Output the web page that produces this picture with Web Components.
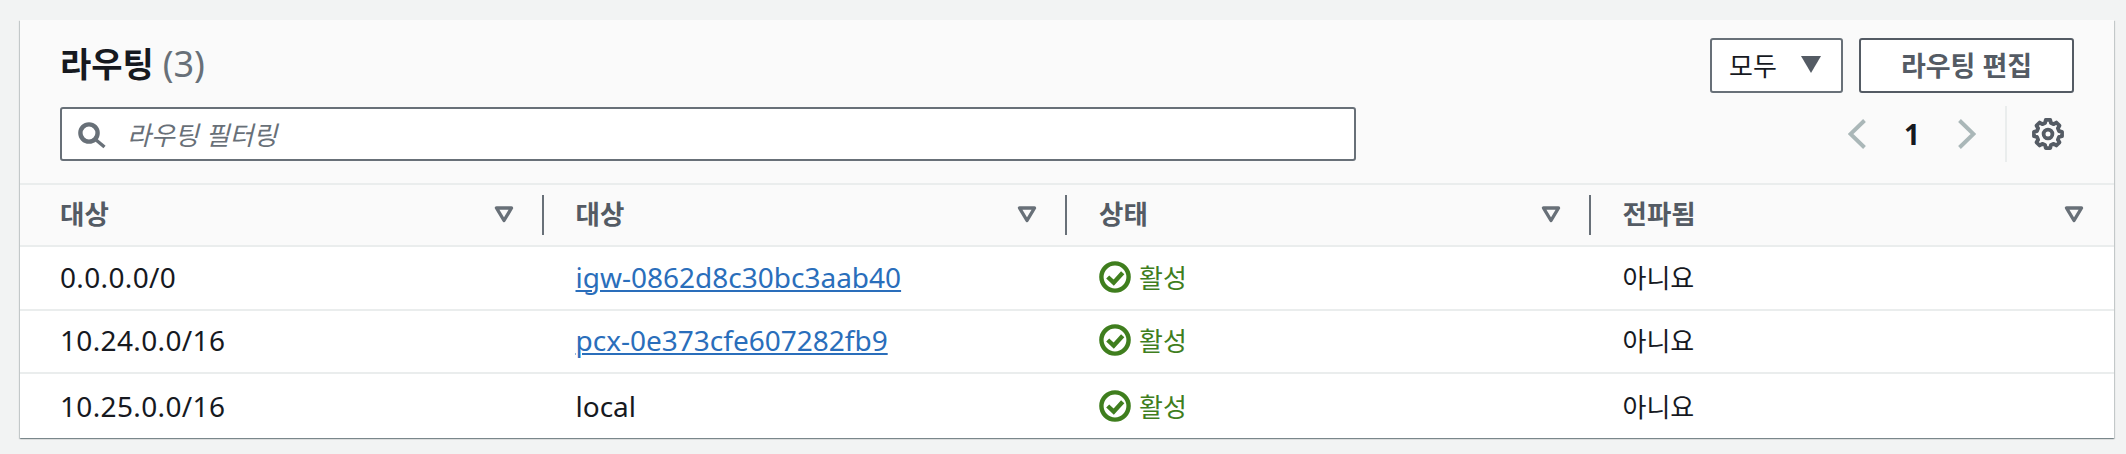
<!DOCTYPE html>
<html lang="ko">
<head>
<meta charset="utf-8">
<title>라우팅</title>
<style>
  html, body { margin: 0; height: 100%; }
  body {
    background: #f2f3f3;
    padding: 20px 12px 0 20px;
    box-sizing: border-box;
    overflow: hidden;
    font: 26px "Noto Sans", "Noto Sans CJK KR", sans-serif;
    color: #16191f;
  }
  a { color: #2a6ebb; text-decoration-thickness: 2px; text-underline-offset: 2px; }
</style>
</head>
<body>
<route-panel>
  <route-header slot="header" count="3"></route-header>
  <route-table>
    <route-row>
      <route-cell latin>0.0.0.0/0</route-cell>
      <route-cell latin><a href="#">igw-0862d8c30bc3aab40</a></route-cell>
      <route-cell><status-ok>활성</status-ok></route-cell>
      <route-cell>아니요</route-cell>
    </route-row>
    <route-row>
      <route-cell latin>10.24.0.0/16</route-cell>
      <route-cell latin><a href="#">pcx-0e373cfe607282fb9</a></route-cell>
      <route-cell><status-ok>활성</status-ok></route-cell>
      <route-cell>아니요</route-cell>
    </route-row>
    <route-row>
      <route-cell latin>10.25.0.0/16</route-cell>
      <route-cell latin>local</route-cell>
      <route-cell><status-ok>활성</status-ok></route-cell>
      <route-cell>아니요</route-cell>
    </route-row>
  </route-table>
</route-panel>

<script>
// outline of the settings gear, 8 teeth around the middle of a 32 box
function gearPath() {
  const pts = [];
  for (let i = 0; i < 8; i++) {
    const a = i * 45 - 90;
    [[-15, 11.4], [-9, 14.2], [9, 14.2], [15, 11.4]].forEach(([d, r]) => {
      const t = (a + d) * Math.PI / 180;
      pts.push((16 + r * Math.cos(t)).toFixed(2) + ' ' + (16 + r * Math.sin(t)).toFixed(2));
    });
  }
  return 'M' + pts.join('L') + 'Z';
}

class RoutePanel extends HTMLElement {
  connectedCallback() {
    this.attachShadow({ mode: 'open' });
    this.shadowRoot.innerHTML = `
      <style>
        :host {
          display: block;
          height: 418px;
          background: #fff;
          box-shadow: 0 1px 1px 0 rgba(0,28,36,.3), 1px 1px 1px 0 rgba(0,28,36,.15), -1px 1px 1px 0 rgba(0,28,36,.15);
        }
      </style>
      <slot name="header"></slot>
      <slot></slot>
    `;
  }
}

class RouteHeader extends HTMLElement {
  connectedCallback() {
    this.attachShadow({ mode: 'open' });
    this.shadowRoot.innerHTML = `
      <style>
        :host {
          display: flex;
          justify-content: space-between;
          padding: 18px 40px 21px;
          height: 124px;
          background: #fafafa;
          border-bottom: 2px solid #eaeded;
        }
        .left { display: flex; flex-direction: column; }
        h2 { margin: 0; padding-top: 2px; font-size: 34px; line-height: 48px; font-weight: 700; color: #16191f; }
        h2 span { font-size: 36px; font-weight: 400; color: #687078; }
        .filter {
          margin-top: 19px;
          width: 1296px;
          height: 54px;
          box-sizing: border-box;
          display: flex;
          align-items: center;
          gap: 18px;
          padding-left: 15px;
          background: #fff;
          border: 2px solid #687078;
          border-radius: 3px;
        }
        .filter span { font-style: italic; color: #687078; }
        .right { display: flex; flex-direction: column; align-items: flex-end; }
        .btns { display: flex; gap: 16px; height: 55px; }
        .btn {
          box-sizing: border-box;
          display: flex;
          align-items: center;
          padding-bottom: 2px;
          background: #fff;
          border-radius: 3px;
        }
        .mode { width: 133px; padding-left: 17px; gap: 24px; border: 2px solid #687078; color: #16191f; }
        .edit { width: 215px; justify-content: center; border: 2px solid #545b64; color: #545b64; font-weight: 700; font-size: 27px; }
        .pager { margin-top: 13px; height: 56px; display: flex; align-items: center; padding-right: 10px; }
        .num { width: 20px; margin: 0 36px 0 36px; text-align: center; font-weight: 700; font-size: 28px; }
        .div { width: 2px; height: 56px; margin: 0 25px 0 29px; background: #eaeded; }
        svg { display: block; flex: none; }
      </style>
      <div class="left">
        <h2>라우팅 <span>(${this.getAttribute('count')})</span></h2>
        <div class="filter">
          <svg width="32" height="32" viewBox="0 0 32 32" fill="none" stroke="#687078" stroke-width="4.4"><circle cx="12" cy="15" r="8.6"/><path d="M18.5 21.5l9 7.5" stroke-width="3.4"/></svg>
          <span>라우팅 필터링</span>
        </div>
      </div>
      <div class="right">
        <div class="btns">
          <div class="btn mode">모두
            <svg width="20" height="17" viewBox="0 0 20 17"><path d="M0 0h20L10 17z" fill="#545b64"/></svg>
          </div>
          <div class="btn edit">라우팅 편집</div>
        </div>
        <div class="pager">
          <svg width="18" height="30" viewBox="0 0 18 30" fill="none" stroke="#aab7b8" stroke-width="4"><path d="M16.5 1.5L2.5 15l14 13.5"/></svg>
          <div class="num">1</div>
          <svg width="18" height="30" viewBox="0 0 18 30" fill="none" stroke="#aab7b8" stroke-width="4"><path d="M1.5 1.5L15.5 15l-14 13.5"/></svg>
          <div class="div"></div>
          <svg width="32" height="32" viewBox="0 0 32 32" fill="none" stroke="#545b64" stroke-width="3.8" stroke-linejoin="round"><circle cx="16" cy="16" r="4.4"/><path d="${gearPath()}"/></svg>
        </div>
      </div>
    `;
  }
}

class RouteTable extends HTMLElement {
  connectedCallback() {
    this.attachShadow({ mode: 'open' });
    const heads = ['대상', '대상', '상태', '전파됨'];
    this.shadowRoot.innerHTML = `
      <style>
        :host { display: block; }
        .head {
          display: grid;
          grid-template-columns: repeat(4, 1fr);
          align-items: center;
          height: 60px;
          background: #fafafa;
          border-bottom: 2px solid #eaeded;
        }
        .th {
          height: 40px;
          margin-left: -2px;
          display: flex;
          align-items: center;
          justify-content: space-between;
          padding: 0 30px 0 32px;
          font-weight: 700;
          font-size: 26.5px;
          color: #545b64;
          border-left: 2px solid #687078;
        }
        .th:first-child { border-left: 0; padding-left: 40px; margin-left: 0; }
        .th span { padding-bottom: 6px; }
        svg { display: block; margin-bottom: 2px; }
      </style>
      <div class="head">
        ${heads.map(h => `
          <div class="th"><span>${h}</span>
            <svg width="20" height="17" viewBox="0 0 20 17" fill="none" stroke="#687078" stroke-width="3.4" stroke-linejoin="round"><path d="M2.5 2h15L10 14.5z"/></svg>
          </div>`).join('')}
      </div>
      <slot></slot>
    `;
  }
}

class RouteRow extends HTMLElement {
  connectedCallback() {
    this.attachShadow({ mode: 'open' });
    this.shadowRoot.innerHTML = `
      <style>
        :host {
          display: grid;
          grid-template-columns: repeat(4, 1fr);
          height: 61.5px;
          border-bottom: 2px solid #eaeded;
        }
        :host(:last-child) { border-bottom: 0; height: 66px; }
      </style>
      <slot></slot>
    `;
  }
}

class RouteCell extends HTMLElement {
  connectedCallback() {
    this.attachShadow({ mode: 'open' });
    this.shadowRoot.innerHTML = `
      <style>
        :host {
          display: flex;
          align-items: center;
          padding-left: 32px;
          padding-bottom: 2px;
          color: #16191f;
        }
        :host(:first-child) { padding-left: 40px; letter-spacing: .35px; }
        :host([latin]) { font-size: 28px; }
      </style>
      <slot></slot>
    `;
  }
}

class StatusOk extends HTMLElement {
  connectedCallback() {
    this.attachShadow({ mode: 'open' });
    this.shadowRoot.innerHTML = `
      <style>
        :host { display: inline-flex; align-items: center; gap: 8px; color: #3f7e1e; }
        svg { display: block; }
      </style>
      <svg width="32" height="32" viewBox="0 0 32 32" fill="none" stroke="#3f7e1e" stroke-width="4.4"><circle cx="16" cy="16" r="13.6"/><path d="M8.7 16l6 5.7 9-10"/></svg>
      <slot></slot>
    `;
  }
}

customElements.define('route-panel', RoutePanel);
customElements.define('route-header', RouteHeader);
customElements.define('route-table', RouteTable);
customElements.define('route-row', RouteRow);
customElements.define('route-cell', RouteCell);
customElements.define('status-ok', StatusOk);
</script>
</body>
</html>
